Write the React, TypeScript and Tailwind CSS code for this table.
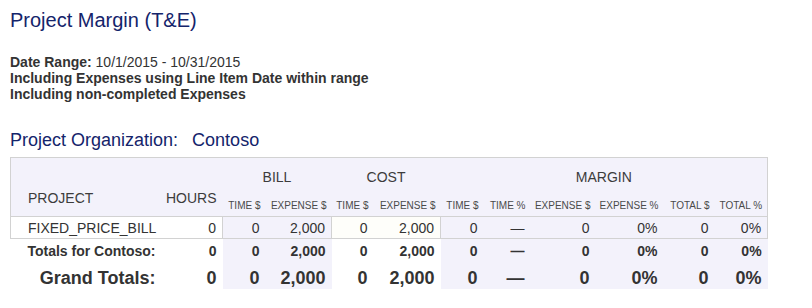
import React from 'react';

const lav = 'bg-[#f3f2fb]';
const ivory = 'bg-[#fefefa]';

// background per numeric column (bill time, bill exp, cost time, cost exp, 6 margin cols)
const detailBg = [lav, lav, ivory, ivory, lav, lav, lav, lav, lav, lav];
const totalBg = [lav, lav, '', '', lav, lav, lav, lav, lav, lav];

const subHeads = ['TIME $', 'EXPENSE $', 'TIME $', 'EXPENSE $', 'TIME $', 'TIME %', 'EXPENSE $', 'EXPENSE %', 'TOTAL $', 'TOTAL %'];
const values = ['0', '2,000', '0', '2,000', '0', '—', '0', '0%', '0', '0%'];
const widths = ['w-[43px]', 'w-[66px]', 'w-[42px]', 'w-[67px]', 'w-[43px]', 'w-[47px]', 'w-[65px]', 'w-[68px]', 'w-[51px]', 'w-[53px]'];

const line = 'border-[#d2d2d2]';

export default function App() {
    return (
        <div className="pl-[10px] bg-white min-h-[308px] font-['Liberation_Sans',Arial,sans-serif]">
            <h1 className="pt-[9px] text-[20px] leading-[23px] text-[#14246b]">Project Margin (T&amp;E)</h1>

            <div className="mt-[22px] text-[14px] leading-[16px] text-[#333] font-bold">
                <div>
                    Date Range: <span className="font-normal">10/1/2015 - 10/31/2015</span>
                </div>
                <div>Including Expenses using Line Item Date within range</div>
                <div>Including non-completed Expenses</div>
            </div>

            <h2 className="mt-[28px] text-[18px] leading-[21px] text-[#14246b]">
                Project Organization:<span className="ml-[14px]">Contoso</span>
            </h2>

            <table className="mt-[6px] w-[757px] table-fixed border-collapse text-[#333]">
                <colgroup>
                    <col className="w-[151px]" />
                    <col className="w-[61px]" />
                    {widths.map((w, i) => (
                        <col key={i} className={w} />
                    ))}
                </colgroup>
                <thead className={`${lav} text-[#3c3c3c]`}>
                    <tr className="h-[33px]">
                        <th rowSpan={2} className={`border-l border-t ${line} align-bottom pb-[10px] pl-[17px] text-left text-[14px] leading-[16px] font-normal`}>
                            PROJECT
                        </th>
                        <th rowSpan={2} className={`border-t ${line} align-bottom pb-[10px] pr-[6px] text-right text-[14px] leading-[16px] font-normal`}>
                            HOURS
                        </th>
                        <th colSpan={2} className={`border-t ${line} align-top pt-[11px] text-center text-[14px] leading-[16px] font-normal`}>
                            BILL
                        </th>
                        <th colSpan={2} className={`border-t ${line} align-top pt-[11px] text-center text-[14px] leading-[16px] font-normal`}>
                            COST
                        </th>
                        <th colSpan={6} className={`border-t border-r ${line} align-top pt-[11px] text-center text-[14px] leading-[16px] font-normal`}>
                            MARGIN
                        </th>
                    </tr>
                    <tr className="h-[26px]">
                        {subHeads.map((h, i) => (
                            <th
                                key={i}
                                className={`${i === subHeads.length - 1 ? `border-r ${line}` : ''} align-bottom pb-[4px] pr-[5px] text-right text-[10px] leading-[12px] font-normal text-[#4a4a4a] whitespace-nowrap`}
                            >
                                {h}
                            </th>
                        ))}
                    </tr>
                </thead>
                <tbody>
                    <tr className="h-[22px] text-[14px] leading-[16px]">
                        <td className={`border-l border-t border-b ${line} pl-[17px] bg-white`}>FIXED_PRICE_BILL</td>
                        <td className={`border-t border-b ${line} pr-[6px] text-right bg-white`}>0</td>
                        {values.map((v, i) => (
                            <td
                                key={i}
                                className={`border-t border-b ${line} ${i === 0 || i === 2 || i === 4 ? 'border-l' : ''} ${i === values.length - 1 ? 'border-r' : ''} pr-[6px] text-right ${detailBg[i]}`}
                            >
                                {v}
                            </td>
                        ))}
                    </tr>
                    <tr className="h-[22px] text-[14px] leading-[16px] font-bold">
                        <td className="pr-[6px] text-right align-bottom pb-[2px]">Totals for Contoso:</td>
                        <td className="pr-[6px] text-right align-bottom pb-[2px]">0</td>
                        {values.map((v, i) => (
                            <td key={i} className={`pr-[6px] text-right align-bottom pb-[2px] ${totalBg[i]}`}>
                                {v}
                            </td>
                        ))}
                    </tr>
                    <tr className="h-[28px] text-[18px] leading-[21px] font-bold">
                        <td className="pr-[6px] text-right align-bottom">Grand Totals:</td>
                        <td className="pr-[6px] text-right align-bottom">0</td>
                        {values.map((v, i) => (
                            <td key={i} className={`pr-[6px] text-right align-bottom ${totalBg[i]}`}>
                                {v}
                            </td>
                        ))}
                    </tr>
                </tbody>
            </table>
        </div>
    );
}
